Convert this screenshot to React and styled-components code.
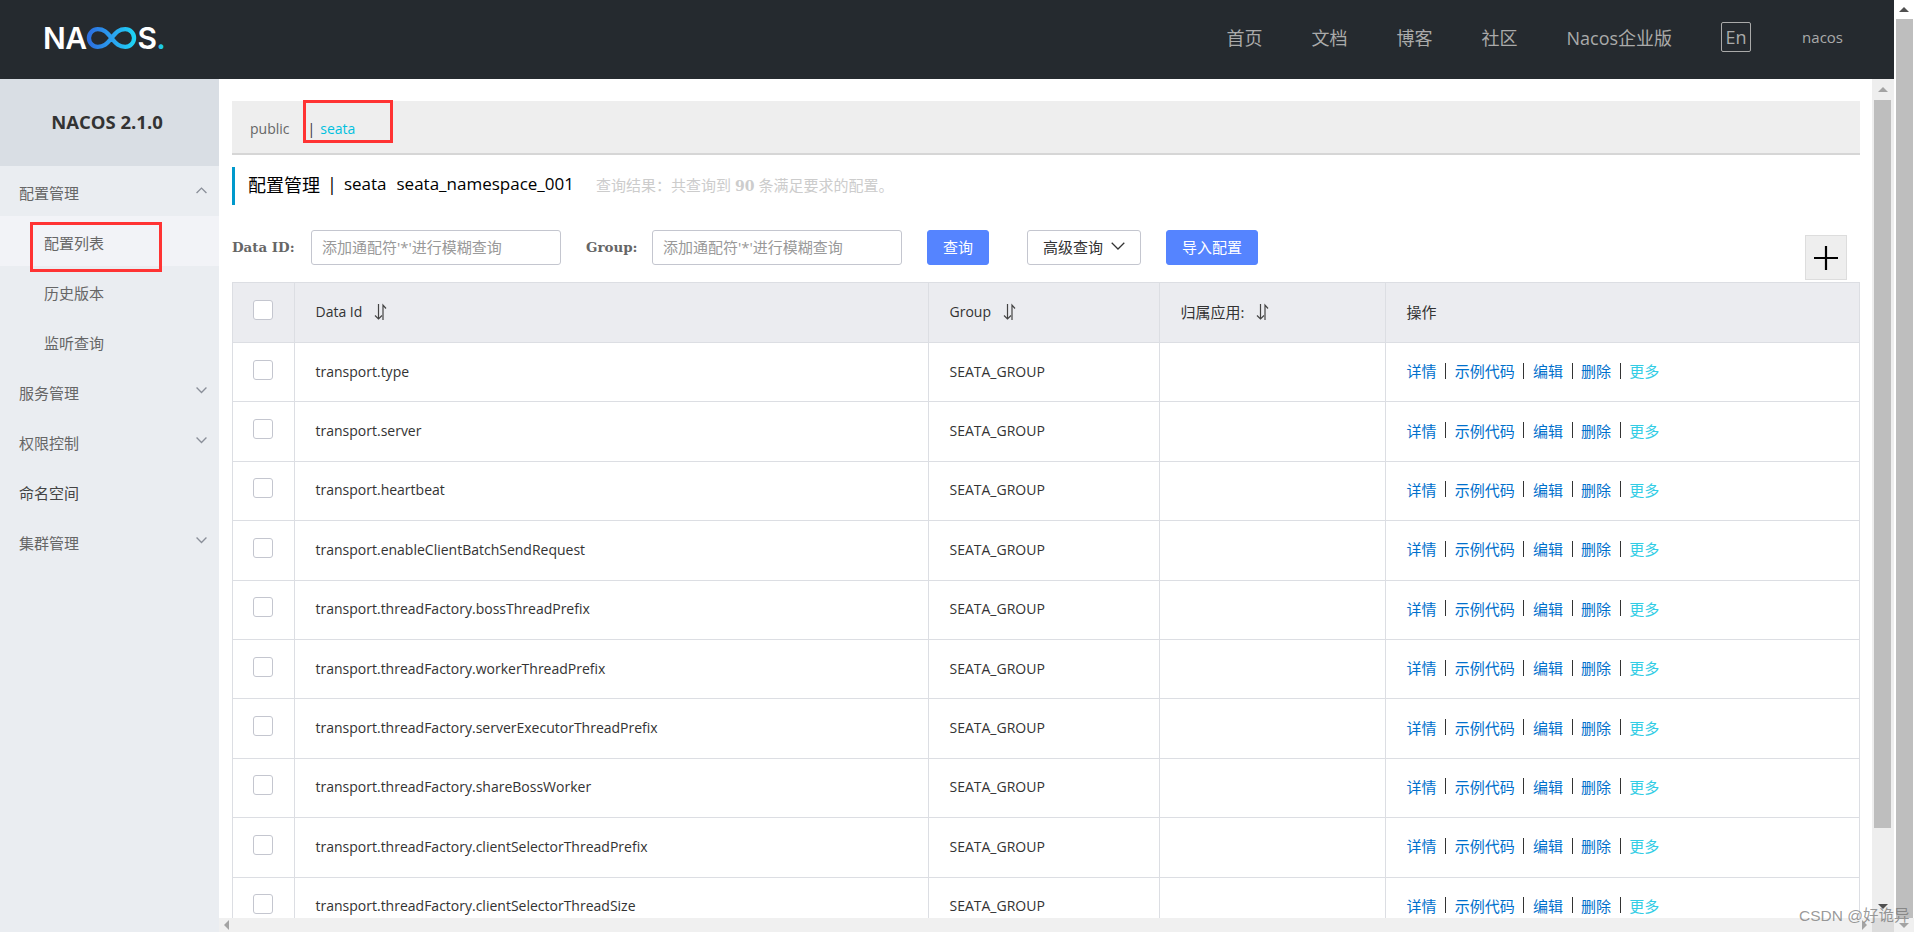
import React from "react";
import styled, { createGlobalStyle } from "styled-components";

const Global = createGlobalStyle`
  html, body { margin: 0; padding: 0; height: 100%; overflow: hidden; background: #fff; }
  * { box-sizing: border-box; }
  body { font-family: "Open Sans", "Noto Sans CJK SC", sans-serif; font-size: 14px; color: #333; }
  #root { height: 100%; }
`;

const Page = styled.div`
  position: relative;
  display: flex;
  width: 1914px;
  height: 932px;
  overflow: hidden;
`;
const Main = styled.div`
  flex: 0 0 1894px;
  display: flex;
  flex-direction: column;
  min-width: 0;
`;
const TopBar = styled.header`
  flex: 0 0 79px;
  display: flex;
  align-items: center;
  background: #252a2f;
  padding: 0 51px 5px 43px;
`;
const Logo = styled.div`
  display: flex;
  align-items: center;
  height: 30px;
  font-family: Inter, sans-serif;
  font-size: 30px;
  font-weight: 600;
  line-height: 30px;
  color: #fff;
  letter-spacing: -0.6px;
  margin-top: 2px;
`;
const LogoDot = styled.span`
  color: #1ec8e6;
`;
const Nav = styled.nav`
  margin-left: auto;
  display: flex;
  align-items: center;
  gap: 49px;
  color: #aaa;
  font-size: 18px;
`;
const LangBox = styled.span`
  display: flex;
  align-items: center;
  justify-content: center;
  width: 30px;
  height: 30px;
  border: 1px solid #aaa;
  border-radius: 2px;
  font-size: 18px;
`;
const UserName = styled.span`
  font-size: 15px;
  margin-left: 2px;
`;
const Body = styled.div`
  flex: 1;
  display: flex;
  min-height: 0;
`;
const Sidebar = styled.aside`
  flex: 0 0 219px;
  background: #eaedf1;
`;
const SideHead = styled.div`
  height: 87px;
  display: flex;
  align-items: center;
  justify-content: center;
  background: #d9dee4;
  font-size: 18.5px;
  font-weight: 700;
  color: #333;
  padding: 0 5px 2px 0;
`;
const MenuItem = styled.div`
  height: 50px;
  display: flex;
  align-items: center;
  justify-content: space-between;
  padding: 2px 12px 0 ${(p) => (p.$sub ? 44 : 19)}px;
  font-size: 15px;
  color: ${(p) => (p.$dark ? "#444" : "#666")};
  background: ${(p) => (p.$active ? "#f2f3f7" : "transparent")};
`;
const MenuCaret = styled.span`
  display: flex;
  margin-top: -3px;
`;
const Workspace = styled.div`
  flex: 1;
  display: flex;
  flex-direction: column;
  min-width: 0;
`;
const WorkRow = styled.div`
  flex: 1;
  display: flex;
  min-height: 0;
`;
const Content = styled.main`
  flex: 1;
  min-width: 0;
  overflow: hidden;
  padding: 22px 12px 0 13px;
`;
const NamespaceBar = styled.div`
  height: 54px;
  background: #eee;
  border-bottom: 2px solid #d6d6d6;
  display: flex;
  align-items: center;
  padding: 2px 0 0 18px;
  font-size: 14px;
  color: #666;
`;
const NsCurrent = styled.span`
  margin-left: 18px;
  color: #333;
`;
const NsLink = styled.span`
  color: #00c1de;
  margin-left: 5px;
`;
const Title = styled.div`
  margin-top: 12px;
  height: 38px;
  border-left: 3px solid #09c;
  padding: 0 0 5px 13px;
  display: flex;
  align-items: center;
  font-size: 18px;
  color: #000;
`;
const TitleLatin = styled.span`
  margin-left: ${(p) => p.$g}px;
  font-size: ${(p) => p.$size || 17}px;
`;
const TitleHint = styled.span`
  margin: 1px 0 0 22px;
  font-size: 15px;
  color: #ccc;
  b { font-family: "DejaVu Serif", serif; font-size: 14px; margin: 0 4px; }
`;
const FormRow = styled.div`
  margin-top: 25px;
  height: 35px;
  display: flex;
  align-items: flex-start;
`;
const Label = styled.label`
  width: ${(p) => p.$w}px;
  height: 35px;
  line-height: 35px;
  font-family: "DejaVu Serif", serif;
  font-size: 13.4px;
  font-weight: 700;
  color: #666;
`;
const TextInput = styled.input`
  width: 250px;
  height: 35px;
  margin-right: 25px;
  padding: 0 10px 2px;
  border: 1px solid #c4c6cf;
  border-radius: 3px;
  font-family: inherit;
  font-size: 15px;
  outline: none;
  background: #fff;
  &::placeholder { color: #999; opacity: 1; }
`;
const Button = styled.button`
  width: ${(p) => p.$w}px;
  height: 35px;
  margin-right: ${(p) => p.$mr}px;
  border: 1px solid ${(p) => (p.$primary ? "#5584ff" : "#c4c6cf")};
  border-radius: 3px;
  background: ${(p) => (p.$primary ? "#5584ff" : "#fff")};
  color: ${(p) => (p.$primary ? "#fff" : "#333")};
  font-family: inherit;
  font-size: 15px;
  padding: 0 0 2px;
  display: flex;
  align-items: center;
  justify-content: center;
  gap: 8px;
`;
const PlusButton = styled.button`
  width: 42px;
  height: 45px;
  margin: 5px 13px 0 auto;
  flex: none;
  padding: 0;
  border: 1px solid #ddd;
  background: #eee;
  display: flex;
  align-items: center;
  justify-content: center;
`;
const Table = styled.table`
  margin-top: 17px;
  width: 1627px;
  table-layout: fixed;
  border-collapse: collapse;
`;
const Th = styled.th`
  height: 60px;
  background: #ebecf0;
  border: 1px solid #dcdee3;
  padding: 0 0 2px ${(p) => (p.$check ? 0 : 20.5)}px;
  font-weight: 400;
  text-align: left;
  color: #333;
  font-size: ${(p) => (p.$cjk ? 15 : 14)}px;
`;
const Td = styled.td`
  height: 59.4px;
  border: 1px solid #dcdee3;
  padding: 0 0 2px ${(p) => (p.$check ? 0 : 20.5)}px;
  color: #333;
  font-size: 14px;
`;
const HeadInner = styled.span`
  display: inline-flex;
  align-items: center;
  gap: 12px;
`;
const Check = styled.span`
  display: block;
  width: 20px;
  height: 20px;
  margin: -3px auto 0 20px;
  border: 1px solid #c4c6cf;
  border-radius: 3px;
  background: #fff;
`;
const Actions = styled.div`
  display: flex;
  align-items: center;
  margin-top: -1px;
  font-size: 15px;
`;
const ActionLink = styled.a`
  color: ${(p) => (p.$more ? "#33cde5" : "#0070cc")};
`;
const Sep = styled.span`
  width: 1px;
  height: 16px;
  margin: 0 8.6px;
  background: #333;
`;
const VBar = styled.div`
  flex: 0 0 ${(p) => p.$w}px;
  display: flex;
  flex-direction: column;
  align-items: center;
  background: ${(p) => p.$bg};
`;
const BarCap = styled.div`
  flex: 0 0 ${(p) => p.$h}px;
  align-self: stretch;
  display: flex;
  align-items: center;
  justify-content: center;
  background: ${(p) => p.$bg || "transparent"};
`;
const VThumb = styled.div`
  flex: 0 0 ${(p) => p.$h}px;
  width: 17px;
  background: #bebebe;
  margin-left: ${(p) => p.$ml || 0}px;
`;
const VSpacer = styled.div`
  flex: 1;
`;
const Arrow = styled.span`
  width: 0;
  height: 0;
  border-style: solid;
  border-color: transparent;
  ${(p) => p.$dir === "up" && `border-width: 0 5px 5px; border-bottom-color: ${p.$c};`}
  ${(p) => p.$dir === "down" && `border-width: 5px 5px 0; border-top-color: ${p.$c};`}
  ${(p) => p.$dir === "left" && `border-width: 5px 5px 5px 0; border-right-color: ${p.$c};`}
  ${(p) => p.$dir === "right" && `border-width: 5px 0 5px 5px; border-left-color: ${p.$c};`}
`;
const HBar = styled.div`
  flex: 0 0 14px;
  display: flex;
  align-items: center;
  background: #f0f0f0;
  padding-left: 5px;
`;
const HSpacer = styled.div`
  flex: 1;
`;
const Corner = styled.div`
  flex: 0 0 22px;
  align-self: stretch;
  margin-left: 5px;
  background: #dcdcdc;
`;
const Annotation = styled.div`
  position: absolute;
  left: ${(p) => p.$x}px;
  top: ${(p) => p.$y}px;
  width: ${(p) => p.$w}px;
  height: ${(p) => p.$h}px;
  border: 3px solid #f33;
`;
const Watermark = styled.div`
  position: absolute;
  left: 1799px;
  top: 907px;
  font-family: "Liberation Sans", "Noto Sans CJK SC", sans-serif;
  font-size: 15.5px;
  line-height: 18px;
  color: rgba(110, 110, 110, 0.7);
  white-space: nowrap;
`;

const Chevron = ({ up, size = 11, color = "#8a8f99", width = 1.2 }) => (
  <svg width={size} height={size * 0.6} viewBox="0 0 10 6" fill="none" stroke={color} strokeWidth={width}>
    <path d={up ? "M0.5 5.5L5 1l4.5 4.5" : "M0.5 0.5L5 5l4.5-4.5"} />
  </svg>
);
const SortIcon = () => (
  <svg width="13" height="18" viewBox="0 0 13 18" fill="none" stroke="#444" strokeWidth="1.2">
    <path d="M4.5 1v15M1 12.5L4.5 16 8 12.5" />
    <path d="M9 17V2l3 3.5" />
  </svg>
);
const Infinity8 = () => (
  <svg width="51" height="24" viewBox="0 0 52 24" fill="none">
    <defs>
      <linearGradient id="nacosGrad" x1="0" x2="1" y1="0" y2="0">
        <stop offset="0" stopColor="#2c6fe0" />
        <stop offset="0.55" stopColor="#2aa4f0" />
        <stop offset="1" stopColor="#1ed3f5" />
      </linearGradient>
    </defs>
    <path
      d="M26 12C21 5.5 18 3 12 3a9 9 0 0 0 0 18c6 0 9-2.5 14-9S34 3 40 3a9 9 0 0 1 0 18c-6 0-9-2.5-14-9z"
      stroke="url(#nacosGrad)"
      strokeWidth="4.4"
    />
  </svg>
);

const rows = [
  "transport.type",
  "transport.server",
  "transport.heartbeat",
  "transport.enableClientBatchSendRequest",
  "transport.threadFactory.bossThreadPrefix",
  "transport.threadFactory.workerThreadPrefix",
  "transport.threadFactory.serverExecutorThreadPrefix",
  "transport.threadFactory.shareBossWorker",
  "transport.threadFactory.clientSelectorThreadPrefix",
  "transport.threadFactory.clientSelectorThreadSize",
];
const actions = ["详情", "示例代码", "编辑", "删除"];
const menu = [
  { t: "配置管理", up: true },
  { t: "配置列表", sub: true, active: true },
  { t: "历史版本", sub: true },
  { t: "监听查询", sub: true },
  { t: "服务管理", down: true },
  { t: "权限控制", down: true },
  { t: "命名空间", dark: true },
  { t: "集群管理", down: true },
];

export default function App() {
  return (
    <Page>
      <Global />
      <Main>
        <TopBar>
          <Logo>
            NA
            <Infinity8 />
            S<LogoDot>.</LogoDot>
          </Logo>
          <Nav>
            <span>首页</span>
            <span>文档</span>
            <span>博客</span>
            <span>社区</span>
            <span>Nacos企业版</span>
            <LangBox>En</LangBox>
            <UserName>nacos</UserName>
          </Nav>
        </TopBar>
        <Body>
          <Sidebar>
            <SideHead>NACOS 2.1.0</SideHead>
            {menu.map((m) => (
              <MenuItem key={m.t} $sub={m.sub} $active={m.active} $dark={m.dark}>
                {m.t}
                {(m.up || m.down) && (
                  <MenuCaret>
                    <Chevron up={m.up} />
                  </MenuCaret>
                )}
              </MenuItem>
            ))}
          </Sidebar>
          <Workspace>
            <WorkRow>
              <Content>
                <NamespaceBar>
                  public
                  <NsCurrent>|</NsCurrent>
                  <NsLink>seata</NsLink>
                </NamespaceBar>
                <Title>
                  配置管理
                  <TitleLatin $g={7} $size={18}>|</TitleLatin>
                  <TitleLatin $g={7}>seata</TitleLatin>
                  <TitleLatin $g={10}>seata_namespace_001</TitleLatin>
                  <TitleHint>
                    查询结果：共查询到<b>90</b>条满足要求的配置。
                  </TitleHint>
                </Title>
                <FormRow>
                  <Label $w={79}>Data ID:</Label>
                  <TextInput placeholder="添加通配符'*'进行模糊查询" />
                  <Label $w={66}>Group:</Label>
                  <TextInput placeholder="添加通配符'*'进行模糊查询" />
                  <Button $primary $w={62} $mr={38}>查询</Button>
                  <Button $w={114} $mr={25}>
                    高级查询
                    <Chevron size={14} color="#333" width={0.9} />
                  </Button>
                  <Button $primary $w={92} $mr={0}>导入配置</Button>
                  <PlusButton>
                    <svg width="26" height="26" viewBox="0 0 26 26" stroke="#000" strokeWidth="2.2">
                      <path d="M13 1v24M1 13h24" />
                    </svg>
                  </PlusButton>
                </FormRow>
                <Table>
                  <colgroup>
                    <col width="62" />
                    <col width="634" />
                    <col width="231" />
                    <col width="226" />
                    <col width="474" />
                  </colgroup>
                  <thead>
                    <tr>
                      <Th $check><Check /></Th>
                      <Th><HeadInner>Data Id <SortIcon /></HeadInner></Th>
                      <Th><HeadInner>Group <SortIcon /></HeadInner></Th>
                      <Th $cjk><HeadInner>归属应用: <SortIcon /></HeadInner></Th>
                      <Th $cjk>操作</Th>
                    </tr>
                  </thead>
                  <tbody>
                    {rows.map((r) => (
                      <tr key={r}>
                        <Td $check><Check /></Td>
                        <Td>{r}</Td>
                        <Td>SEATA_GROUP</Td>
                        <Td />
                        <Td>
                          <Actions>
                            {actions.map((a) => (
                              <React.Fragment key={a}>
                                <ActionLink>{a}</ActionLink>
                                <Sep />
                              </React.Fragment>
                            ))}
                            <ActionLink $more>更多</ActionLink>
                          </Actions>
                        </Td>
                      </tr>
                    ))}
                  </tbody>
                </Table>
              </Content>
              <VBar $w={22} $bg="#eee">
                <BarCap $h={21}><Arrow $dir="up" $c="#a3a3a3" /></BarCap>
                <VThumb $h={728} $ml={-1} />
                <VSpacer />
                <BarCap $h={24}><Arrow $dir="down" $c="#505050" /></BarCap>
              </VBar>
            </WorkRow>
            <HBar>
              <Arrow $dir="left" $c="#a3a3a3" />
              <HSpacer />
              <Arrow $dir="right" $c="#a3a3a3" />
              <Corner />
            </HBar>
          </Workspace>
        </Body>
      </Main>
      <VBar $w={20} $bg="#fff">
        <BarCap $h={19}><Arrow $dir="up" $c="#505050" /></BarCap>
        <VThumb $h={899} />
        <VSpacer />
        <BarCap $h={14} $bg="#f0f0f0"><Arrow $dir="down" $c="#a3a3a3" /></BarCap>
      </VBar>
      <Annotation $x={303} $y={100} $w={90} $h={43} />
      <Annotation $x={30} $y={222} $w={132} $h={50} />
      <Watermark>CSDN @好诡异</Watermark>
    </Page>
  );
}
